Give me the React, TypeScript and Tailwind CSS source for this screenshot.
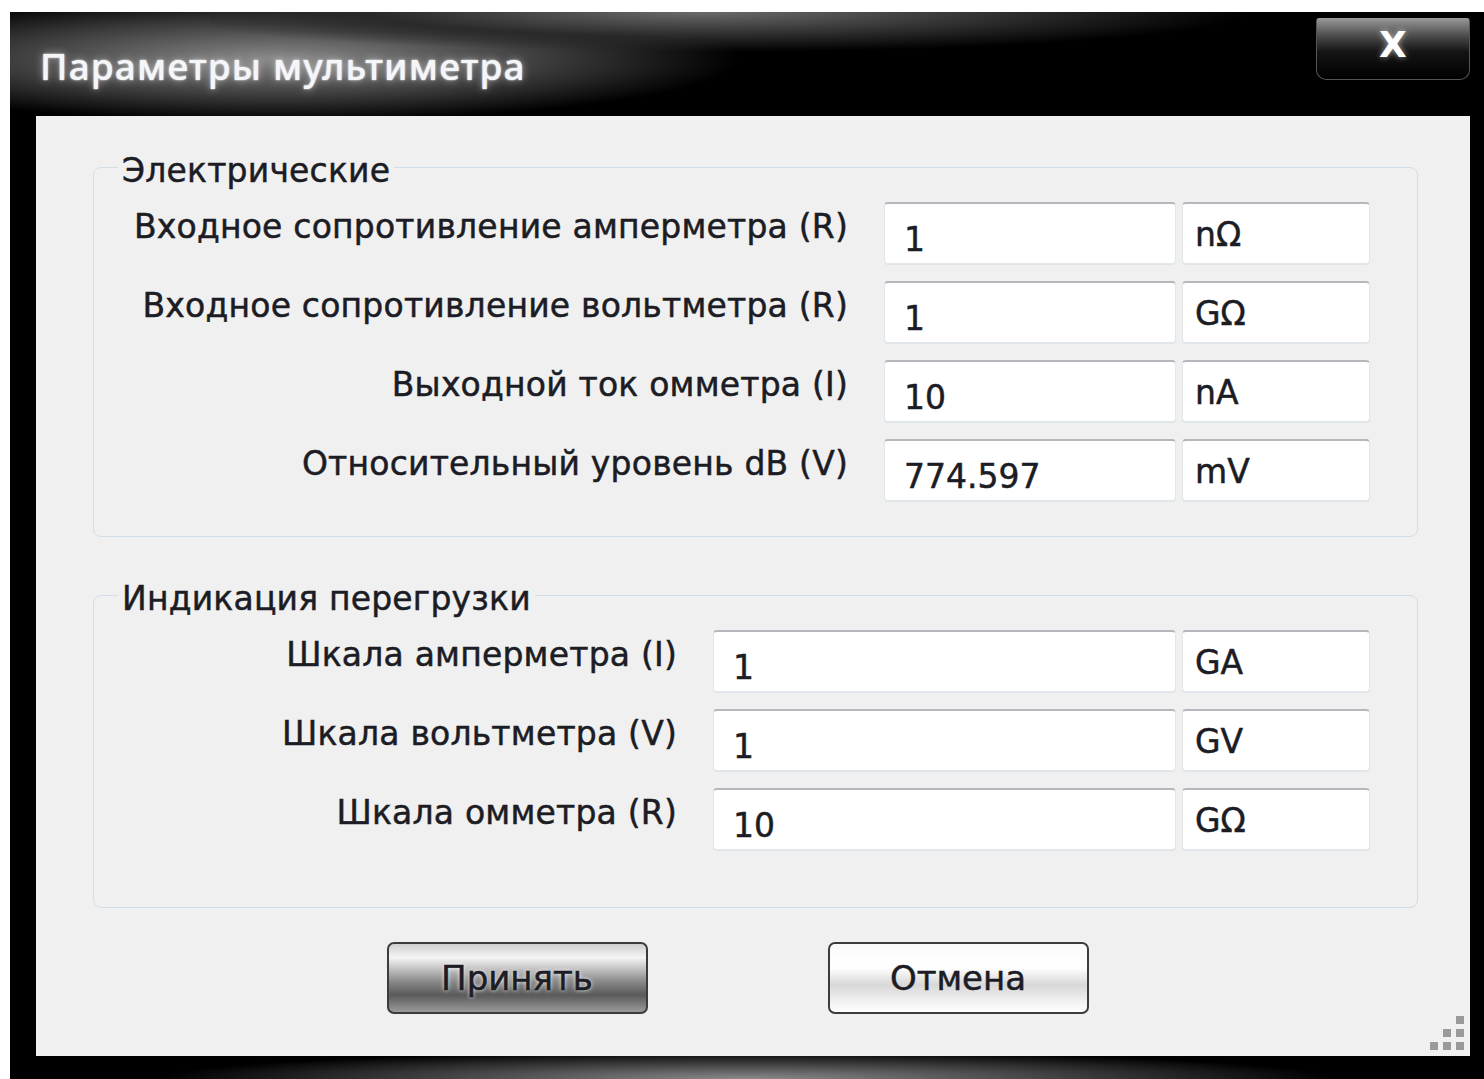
import React from 'react';

type Row = { label: string; value: string; unit: string };

const electric: Row[] = [
  { label: 'Входное сопротивление амперметра (R)', value: '1', unit: 'nΩ' },
  { label: 'Входное сопротивление вольтметра (R)', value: '1', unit: 'GΩ' },
  { label: 'Выходной ток омметра (I)', value: '10', unit: 'nA' },
  { label: 'Относительный уровень dB (V)', value: '774.597', unit: 'mV' },
];

const overload: Row[] = [
  { label: 'Шкала амперметра (I)', value: '1', unit: 'GA' },
  { label: 'Шкала вольтметра (V)', value: '1', unit: 'GV' },
  { label: 'Шкала омметра (R)', value: '10', unit: 'GΩ' },
];

const font = "font-['DejaVu_Sans',sans-serif]";
const ink = 'text-[#1c1c24] [-webkit-text-stroke:0.5px_#1c1c24]';

const Field: React.FC<{ text: string; className: string }> = ({ text, className }) => (
  <div
    className={`h-[62px] bg-white rounded-[4px] border border-[#e2e7ec] border-t-2 border-t-[#b4b8bc] shadow-[0_1px_1px_#dfe4e8] flex items-center text-[33px] ${ink} ${className}`}
  >
    {text}
  </div>
);

const FieldRow: React.FC<{ row: Row; valueWidth: string }> = ({ row, valueWidth }) => (
  <div className="flex items-center">
    <div className={`flex-1 text-right text-[33px] tracking-[0.2px] pr-[36px] -mt-[12px] whitespace-nowrap ${ink}`}>
      {row.label}
    </div>
    <Field text={row.value} className={`${valueWidth} pl-[19px] pt-[12px]`} />
    <Field text={row.unit} className="w-[188px] ml-[6px] pl-[12px] pt-[2px]" />
  </div>
);

const Group: React.FC<{ title: string; rows: Row[]; valueWidth: string; className?: string }> = ({
  title,
  rows,
  valueWidth,
  className = '',
}) => (
  <fieldset className={`border border-[#d3dde6] rounded-[8px] pl-[24px] pr-[47px] pt-[15px] ${className}`}>
    <legend className={`px-[4px] text-[33px] tracking-[0.2px] leading-[40px] ${ink}`}>
      <span className="relative top-[4px]">{title}</span>
    </legend>
    <div className="flex flex-col gap-[17px]">
      {rows.map((r) => (
        <FieldRow key={r.label} row={r} valueWidth={valueWidth} />
      ))}
    </div>
  </fieldset>
);

export default function App() {
  return (
    <div className={`w-[1484px] h-[1079px] bg-white overflow-hidden pt-[12px] pl-[10px] ${font}`}>
      <div className="relative h-[1067px] bg-black flex flex-col">
        {/* title bar with the glow behind the caption */}
        <div className="relative h-[104px] bg-[radial-gradient(ellipse_42%_80%_at_18%_45%,#8a8a8a_0%,#3a3a3a_45%,#000_75%),linear-gradient(#000,#000)] flex items-center pl-[30px]">
          <div className="absolute left-[200px] right-[180px] top-0 h-[40px] bg-[radial-gradient(ellipse_50%_100%_at_45%_0%,#6a6a6a_0%,#2a2a2a_60%,transparent_100%)]" />
          <span className="relative font-['Noto_Sans',sans-serif] font-medium text-[37px] tracking-[1.2px] text-[#f4f6fa] [text-shadow:0_0_8px_rgba(255,255,255,0.55),0_0_2px_#fff] mt-[4px]">
            Параметры мультиметра
          </span>
          {/* close button */}
          <div className="absolute right-[14px] top-[6px] w-[154px] h-[62px] rounded-b-[10px] rounded-t-[3px] border border-[#555] border-t-0 bg-[linear-gradient(#9a9a9a_0%,#4a4a4a_30%,#151515_55%,#000_100%)] flex items-start justify-center pt-[9px]">
            <span className="font-['DejaVu_Sans',sans-serif] font-bold text-[36px] leading-none text-white [text-shadow:0_0_6px_rgba(255,255,255,0.6)]">
              X
            </span>
          </div>
        </div>

        {/* client area */}
        <div className="relative ml-[26px] mr-[14px] h-[940px] bg-[#f0f0f0] pl-[57px] pr-[52px] pt-[31px] flex flex-col">
          <Group title="Электрические" rows={electric} valueWidth="w-[292px]" className="pb-[35px]" />
          <Group title="Индикация перегрузки" rows={overload} valueWidth="w-[463px]" className="mt-[38px] pb-[57px]" />

          <div className="flex justify-center gap-[180px] mt-[34px] pr-[36px]">
            <button className="w-[261px] h-[72px] rounded-[7px] border-2 border-[#3c3c3c] bg-[linear-gradient(#cfcfcf_0%,#f5f5f5_20%,#8a8a8a_55%,#5a5a5a_75%,#9a9a9a_100%)] text-[34px] text-[#1c1c24] [-webkit-text-stroke:0.5px_#1c1c24] [text-shadow:0_0_4px_#fff]">
              Принять
            </button>
            <button className="w-[261px] h-[72px] rounded-[7px] border-2 border-[#3c3c3c] bg-[linear-gradient(#fafafa_0%,#ffffff_35%,#d8d8d8_60%,#f2f2f2_85%,#ffffff_100%)] text-[34px] text-[#1c1c24] [-webkit-text-stroke:0.5px_#1c1c24]">
              Отмена
            </button>
          </div>

          {/* size grip */}
          <div className="absolute right-[6px] bottom-[6px] grid grid-cols-3 gap-[5px]">
            <span className="w-[8px] h-[8px]" />
            <span className="w-[8px] h-[8px]" />
            <span className="w-[8px] h-[8px] bg-[#9a9a9a]" />
            <span className="w-[8px] h-[8px]" />
            <span className="w-[8px] h-[8px] bg-[#9a9a9a]" />
            <span className="w-[8px] h-[8px] bg-[#9a9a9a]" />
            <span className="w-[8px] h-[8px] bg-[#9a9a9a]" />
            <span className="w-[8px] h-[8px] bg-[#9a9a9a]" />
            <span className="w-[8px] h-[8px] bg-[#9a9a9a]" />
          </div>
        </div>

        {/* bottom frame */}
        <div className="flex-1 bg-[radial-gradient(ellipse_40%_120%_at_50%_100%,#8a8a8a_0%,#2a2a2a_70%,#000_100%)]" />
      </div>
    </div>
  );
}
